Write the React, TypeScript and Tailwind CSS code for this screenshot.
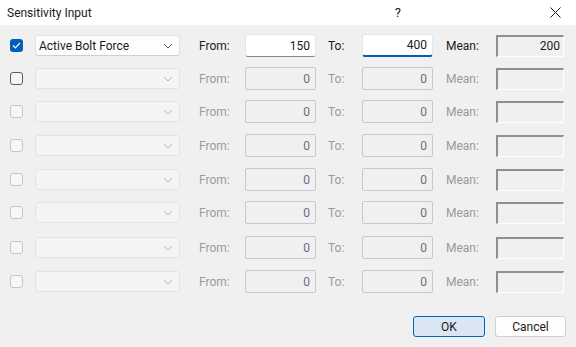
import React from 'react'

// vertical gap above each row, so the rows land where the dialog puts them
const ROW_GAPS = ['mt-[9px]', 'mt-[10px]', 'mt-[10px]', 'mt-[11px]', 'mt-[11px]', 'mt-[10px]', 'mt-[12px]', 'mt-[11px]']

const Chevron: React.FC<{ dim?: boolean }> = ({ dim }) => (
  <svg width="10" height="6" viewBox="0 0 10 6" className="absolute right-[6px] top-1/2 -translate-y-1/2">
    <path d="M1 1l4 4 4-4" fill="none" stroke={dim ? '#b4b4b4' : '#5f5f5f'} strokeWidth="1" />
  </svg>
)

const CheckBox: React.FC<{ checked?: boolean; enabled?: boolean }> = ({ checked, enabled }) => {
  if (checked) {
    return (
      <div className="w-[13px] h-[13px] rounded-[3px] bg-[#005fb8] flex items-center justify-center">
        <svg width="9" height="7" viewBox="0 0 9 7">
          <path d="M1 3.5l2.3 2.3L8 1" fill="none" stroke="#fff" strokeWidth="1.2" />
        </svg>
      </div>
    )
  }
  return (
    <div
      className={
        enabled
          ? 'w-[13px] h-[13px] rounded-[3px] border border-[#5c5c5c] bg-[#f6f6f6]'
          : 'w-[13px] h-[13px] rounded-[3px] border border-[#c6c6c6] bg-[#f7f7f7]'
      }
    />
  )
}

const Row: React.FC<{ idx: number }> = ({ idx }) => {
  const active = idx === 0
  const label = active ? 'text-[#1a1a1a]' : 'text-[#9a9a9a]'
  return (
    <div className={`flex items-center h-[23px] pl-[10px] ${ROW_GAPS[idx]}`}>
      <CheckBox checked={active} enabled={idx === 1} />
      <div
        className={
          active
            ? 'relative ml-[12px] w-[145px] h-[21px] rounded-[3px] border border-[#e2e2e2] border-b-[#cfcfcf] bg-[#fdfdfd] pl-[3px] flex items-center text-[#1a1a1a]'
            : 'relative ml-[12px] w-[145px] h-[21px] rounded-[3px] border border-[#e3e3e3] bg-[#f4f4f4]'
        }
      >
        {active && 'Active Bolt Force'}
        <Chevron dim={!active} />
      </div>
      <span className={`ml-[19px] w-[46px] ${label}`}>From:</span>
      {active ? (
        <div className="w-[71px] h-[23px] rounded-[3px] border border-[#e5e5e5] border-b-[#8a8a8a] bg-white flex items-center justify-end pr-[5px] text-[#1a1a1a]">
          150
        </div>
      ) : (
        <div className="w-[71px] h-[23px] rounded-[2px] border border-[#c8c8c8] bg-[#f0f0f0] flex items-center justify-end pr-[5px] text-[#6f6a80]">
          0
        </div>
      )}
      <span className={`ml-[12px] w-[34px] ${label}`}>To:</span>
      {active ? (
        <div className="w-[71px] h-[23px] rounded-[3px] border border-[#e5e5e5] border-b-2 border-b-[#005fb8] bg-white flex items-center justify-end pr-[5px] text-[#1a1a1a]">
          400
        </div>
      ) : (
        <div className="w-[71px] h-[23px] rounded-[2px] border border-[#c8c8c8] bg-[#f0f0f0] flex items-center justify-end pr-[5px] text-[#6f6a80]">
          0
        </div>
      )}
      <span className={`ml-[13px] w-[50px] ${label}`}>Mean:</span>
      <div className="w-[68px] h-[22px] border-t-2 border-l-2 border-t-[#8f8f8f] border-l-[#8f8f8f] border-b border-r border-b-white border-r-white bg-[#f0f0f0] flex items-center justify-end pr-[3px] text-[#1a1a1a]">
        {active && '200'}
      </div>
    </div>
  )
}

export default function App() {
  return (
    <div
      className="w-[576px] h-[347px] bg-[#f0f0f0] text-[12px] leading-none overflow-hidden"
      style={{ fontFamily: '"Segoe UI", Roboto, "Noto Sans", sans-serif' }}
    >
      <div className="h-[25px] bg-white flex items-center pl-[7px] text-[#1a1a1a]">
        <span className="pt-[1px]">Sensitivity Input</span>
        <span className="ml-auto mr-[149px] text-[13px]">?</span>
        <svg width="11" height="11" viewBox="0 0 11 11" className="mr-[15px]">
          <path d="M0.5 0.5l10 10M10.5 0.5l-10 10" stroke="#1a1a1a" strokeWidth="1" />
        </svg>
      </div>

      {[0, 1, 2, 3, 4, 5, 6, 7].map((i) => (
        <Row key={i} idx={i} />
      ))}

      <div className="flex justify-end mt-[23px] pr-[10px] gap-[10px]">
        <button className="w-[72px] h-[21px] rounded-[3px] border border-[#0067c0] bg-[#dae6f2] text-[#1a1a1a]">
          OK
        </button>
        <button className="w-[71px] h-[21px] rounded-[3px] border border-[#d0d0d0] bg-[#fdfdfd] text-[#1a1a1a]">
          Cancel
        </button>
      </div>
    </div>
  )
}
